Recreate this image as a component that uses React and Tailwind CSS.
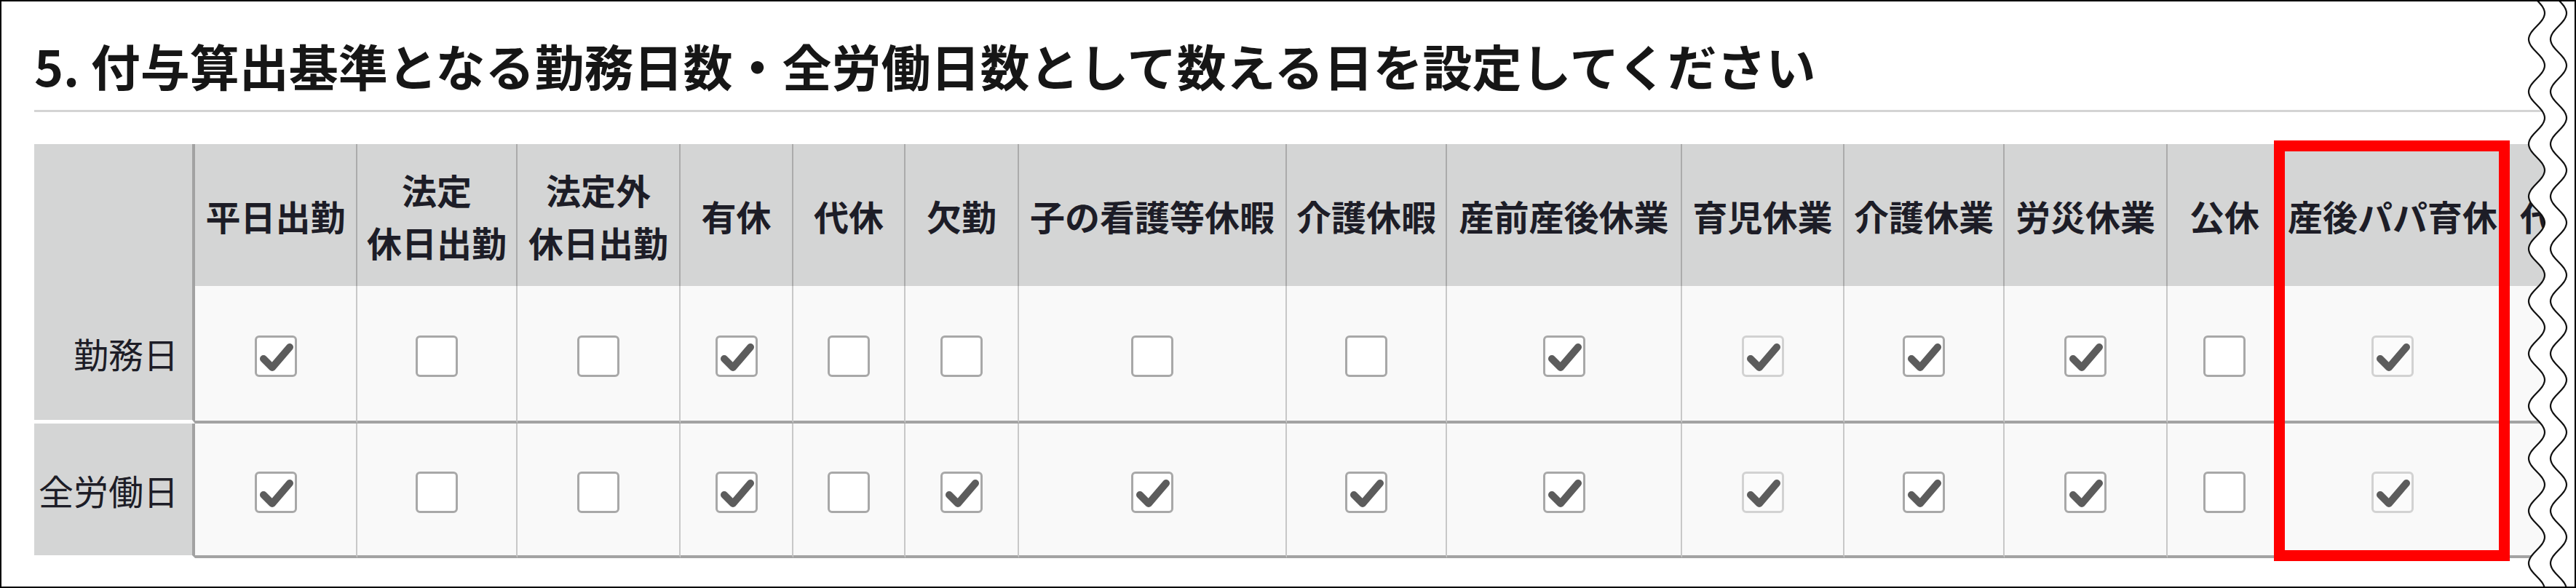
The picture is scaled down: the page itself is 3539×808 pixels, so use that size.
import React from "react";

const headers = [
    { label: "平日出勤" },
    { label: ["法定", "休日出勤"] },
    { label: ["法定外", "休日出勤"] },
    { label: "有休" },
    { label: "代休" },
    { label: "欠勤" },
    { label: "子の看護等休暇" },
    { label: "介護休暇" },
    { label: "産前産後休業" },
    { label: "育児休業", disabled: true },
    { label: "介護休業" },
    { label: "労災休業" },
    { label: "公休" },
    { label: "産後パパ育休", disabled: true },
];

const rows = [
    { label: "勤務日", values: [1, 0, 0, 1, 0, 0, 0, 0, 1, 1, 1, 1, 0, 1] },
    { label: "全労働日", values: [1, 0, 0, 1, 0, 1, 1, 1, 1, 1, 1, 1, 0, 1] },
];

function Checkbox({ checked, disabled }) {
    return (
        <div
            className={
                "w-[58px] h-[57px] rounded-[6px] border-[3px] flex items-center justify-center " +
                (disabled
                    ? "border-[#d2d2d2] bg-[#fbfbfb]"
                    : "border-[#a8a8a8] bg-white")
            }
        >
            {checked ? (
                <svg width="52" height="51" viewBox="0 0 52 51">
                    <path
                        d="M9 29 L21 41 L45 13"
                        fill="none"
                        stroke="#5c5c5c"
                        strokeWidth="10"
                        strokeLinecap="round"
                        strokeLinejoin="round"
                    />
                </svg>
            ) : null}
        </div>
    );
}

function Wave() {
    const pts = [];
    for (let y = 0; y <= 808; y += 2) {
        pts.push([16 + 11 * Math.sin((y / 72) * Math.PI * 2), y]);
    }
    const left = pts
        .map(([x, y], i) => `${i ? "L" : "M"}${x.toFixed(1)} ${y}`)
        .join(" ");
    const right = pts
        .map(([x, y], i) => `${i ? "L" : "M"}${(x + 30).toFixed(1)} ${y}`)
        .join(" ");
    return (
        <svg
            className="absolute -right-[2px] -top-[2px]"
            width="70"
            height="808"
            viewBox="0 0 70 808"
        >
            <path d={left + " L70 808 L70 0 Z"} fill="#ffffff" />
            <path d={left} fill="none" stroke="#111" strokeWidth="2.2" />
            <path d={right} fill="none" stroke="#111" strokeWidth="2.2" />
        </svg>
    );
}

export default function App() {
    return (
        <div className="relative w-[3539px] h-[808px] overflow-hidden bg-white border-2 border-black font-['Noto_Sans_CJK_JP','Noto_Sans',sans-serif]">
            <div className="pl-[45px] pt-[54px]">
                <h1 className="text-[68px] leading-[68px] font-bold text-[#161616] whitespace-nowrap">
                    5. 付与算出基準となる勤務日数・全労働日数として数える日を設定してください
                </h1>
                <div className="mt-[27px] h-[3px] bg-[#d4d4d4]" />

                <div className="relative mt-[44px]">
                    <div className="grid grid-cols-[221px_223px_220px_224px_155px_154px_156px_368px_220px_323px_223px_220px_224px_158px_304px_240px] grid-rows-[195px_189px_185px] w-max">
                        {/* header row */}
                        <div className="bg-[#d4d5d5] border-r-4 border-[#a2a2a2]" />
                        {headers.map((h, i) => (
                            <div
                                key={i}
                                className="bg-[#d4d5d5] border-r-2 border-[#ababab] flex items-center justify-center text-center text-[48px] leading-[72px] font-bold text-[#1d1d27] whitespace-nowrap"
                            >
                                {Array.isArray(h.label) ? (
                                    <span>
                                        {h.label[0]}
                                        <br />
                                        {h.label[1]}
                                    </span>
                                ) : (
                                    h.label
                                )}
                            </div>
                        ))}
                        <div className="bg-[#d4d5d5] flex items-center pl-[22px] text-[48px] leading-[72px] font-bold text-[#1d1d27] whitespace-nowrap">
                            代休
                        </div>

                        {/* body rows */}
                        {rows.map((row, r) => (
                            <React.Fragment key={row.label}>
                                <div
                                    className={
                                        "bg-[#d4d5d5] border-r-4 border-r-[#a2a2a2] border-b-white flex items-center justify-end pr-[19px] text-[48px] text-[#1d1d27] whitespace-nowrap " +
                                        (r === 0 ? "border-b-[5px]" : "border-b-4")
                                    }
                                >
                                    {row.label}
                                </div>
                                {row.values.map((v, i) => (
                                    <div
                                        key={i}
                                        className="bg-[#f9f9f9] border-r-2 border-r-[#c8c8c8] border-b-4 border-b-[#a3a3a3] flex items-center justify-center pt-[8px]"
                                    >
                                        <Checkbox
                                            checked={!!v}
                                            disabled={headers[i].disabled}
                                        />
                                    </div>
                                ))}
                                <div className="bg-[#f9f9f9] border-b-4 border-b-[#a3a3a3]" />
                            </React.Fragment>
                        ))}
                    </div>

                    {/* annotation frame */}
                    <div className="absolute left-[3077px] -top-[5px] w-[324px] h-[578px] border-[15px] border-[#ff0000]" />
                </div>
            </div>
            <Wave />
        </div>
    );
}
